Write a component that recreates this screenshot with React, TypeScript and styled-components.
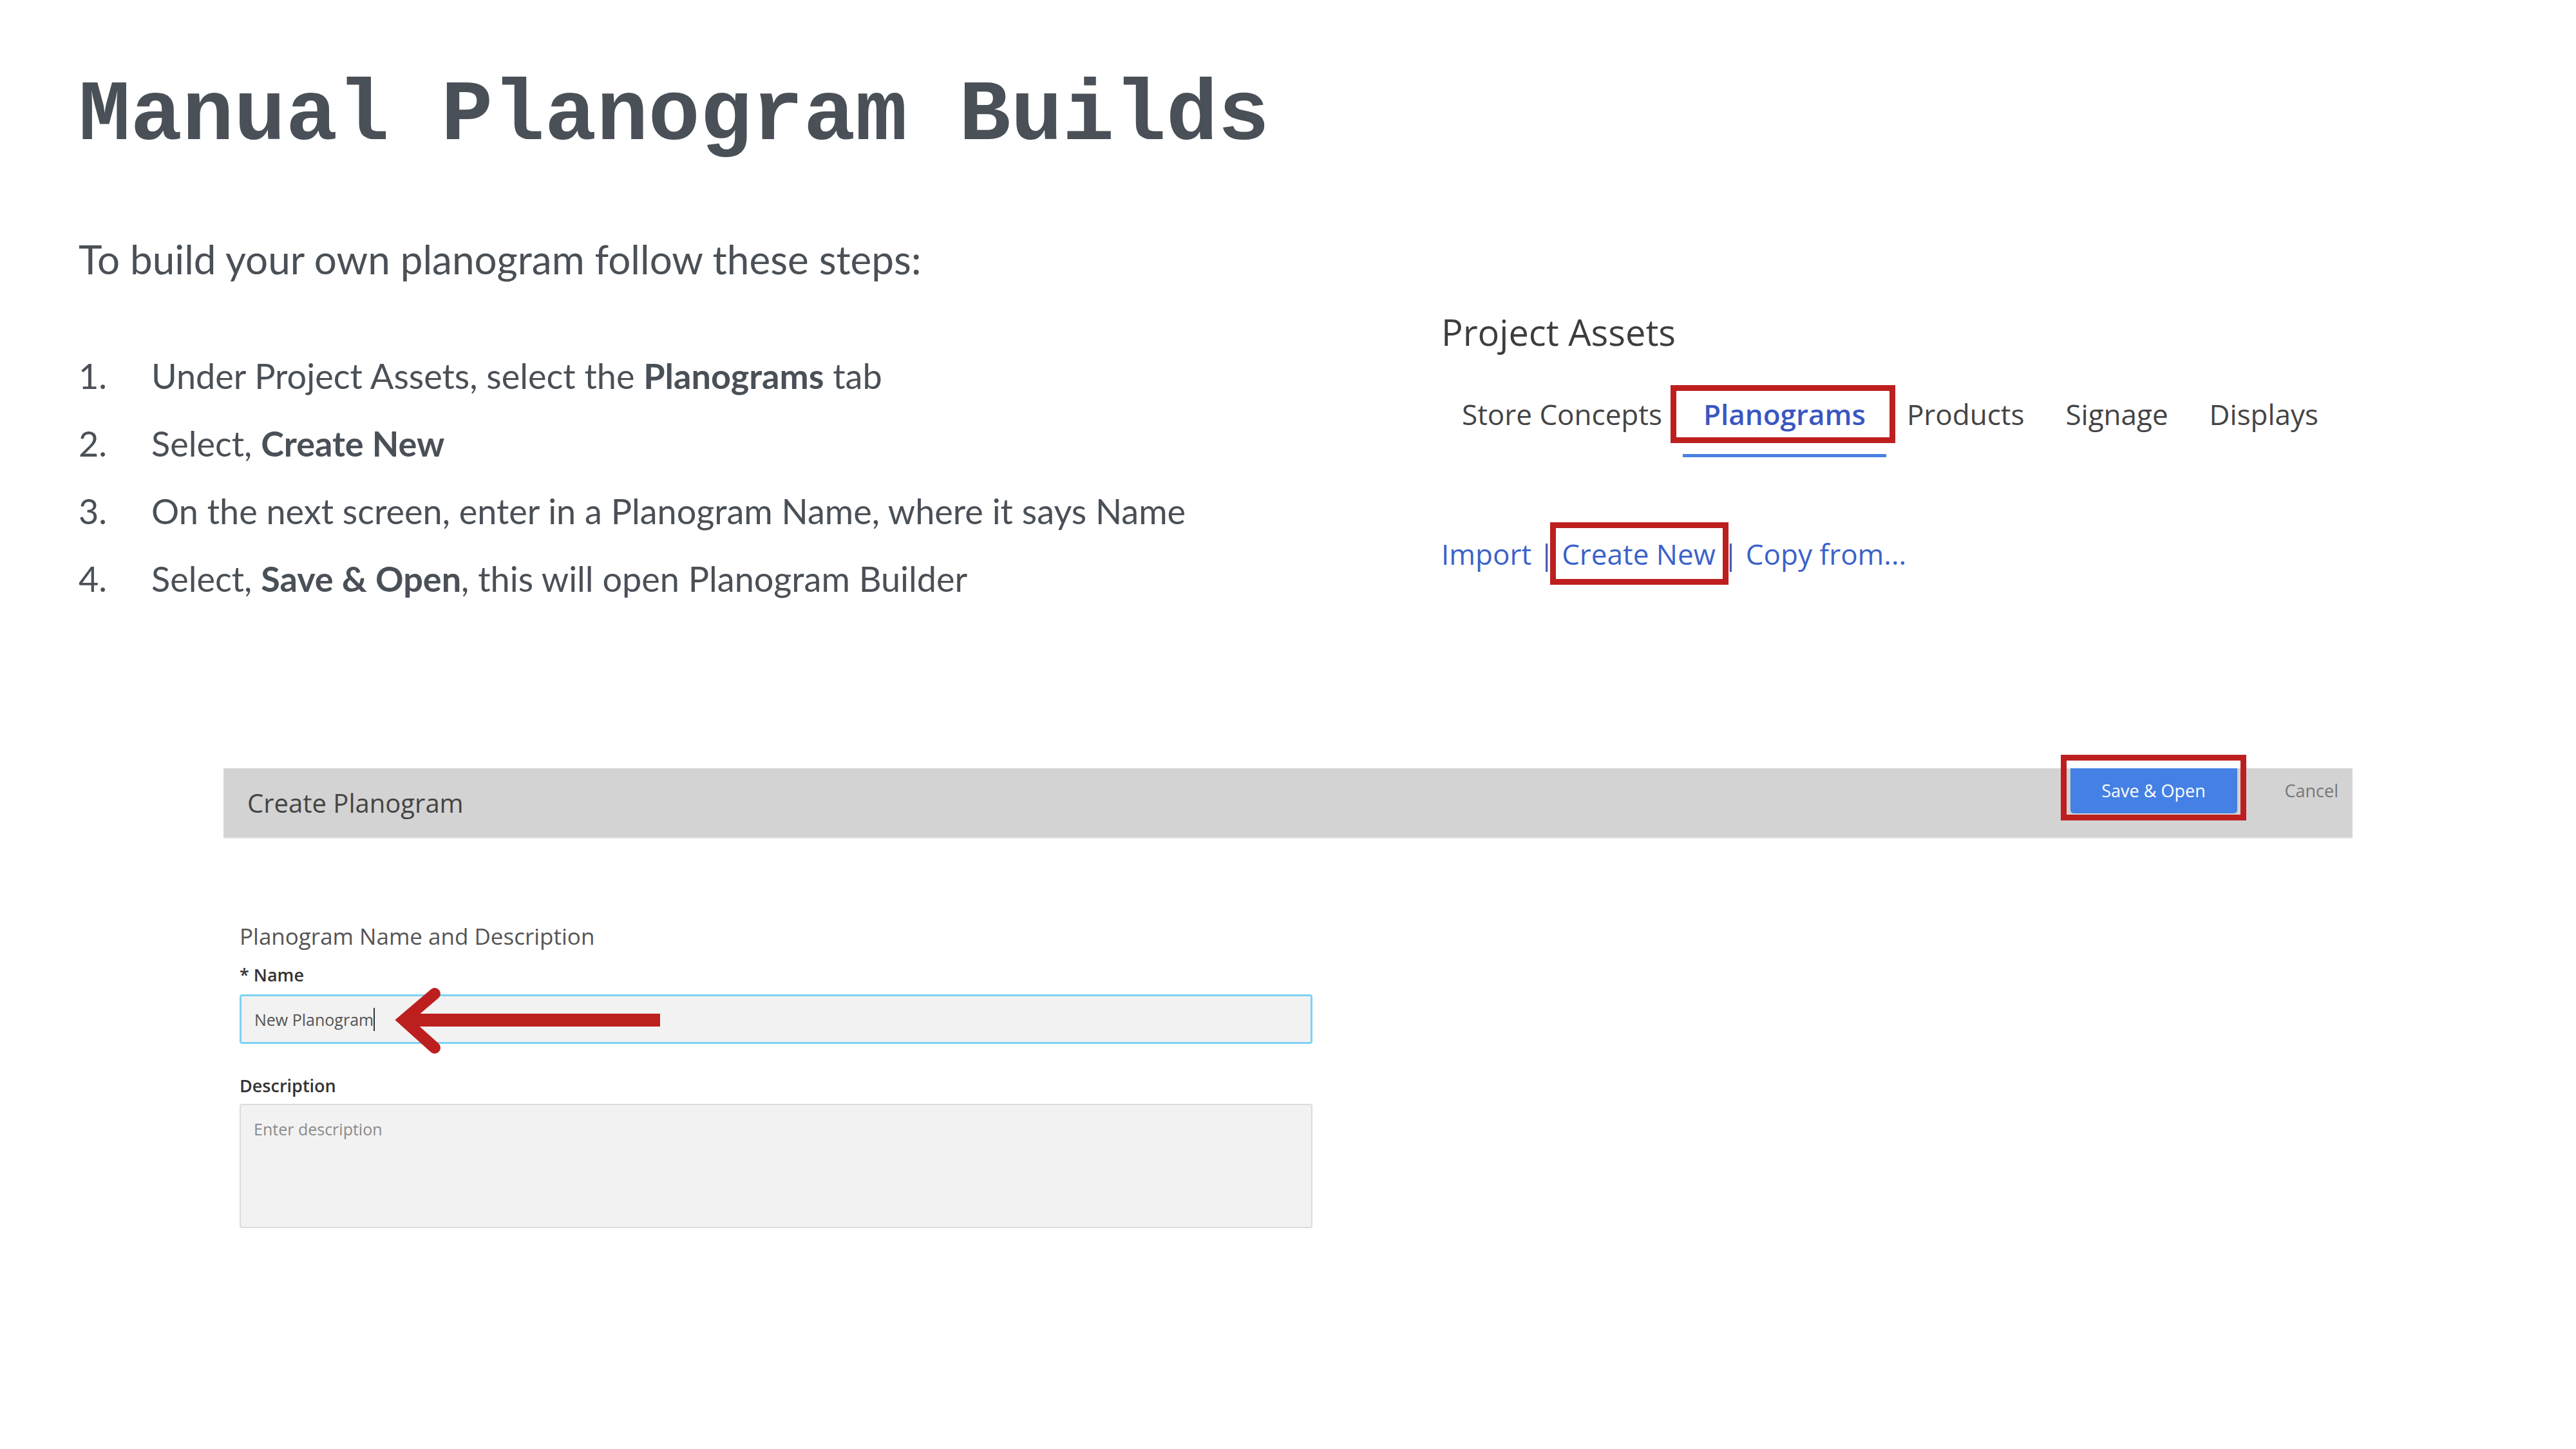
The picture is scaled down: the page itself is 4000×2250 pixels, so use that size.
import styled, { createGlobalStyle } from 'styled-components';

const GlobalStyle = createGlobalStyle`
  html, body {
    margin: 0;
    padding: 0;
    background: #ffffff;
  }
  body {
    width: 4000px;
    height: 2250px;
    overflow: hidden;
  }
`;

const RED = '#bd1f1f';

const Slide = styled.div`
  box-sizing: border-box;
  width: 4000px;
  height: 2250px;
  padding: 104px 0 0 122px;
  background: #ffffff;
  color: #4a5057;
`;

const Title = styled.h1`
  margin: 0;
  font-family: 'Liberation Mono', 'DejaVu Sans Mono', monospace;
  font-weight: 700;
  font-size: 134px;
  line-height: 152px;
  color: #4a5057;
  white-space: nowrap;
`;

const Columns = styled.div`
  display: flex;
  align-items: flex-start;
`;

const Steps = styled.div`
  width: 2116px;
  padding-top: 111px;
  font-family: Lato, 'Open Sans', sans-serif;
`;

const Intro = styled.p`
  margin: 0;
  font-size: 62px;
  line-height: 70px;
  color: #4a5057;
`;

const StepList = styled.ol`
  margin: 94px 0 0;
  padding: 0;
  list-style: none;
`;

const Step = styled.li`
  display: flex;
  font-size: 54px;
  line-height: 105px;
  color: #4a5057;
  white-space: nowrap;

  b {
    font-weight: 700;
  }
`;

const StepNum = styled.span`
  width: 113px;
  flex: none;
`;

const Assets = styled.div`
  padding-top: 221px;
  font-family: 'Open Sans', sans-serif;
`;

const AssetsHeading = styled.h2`
  margin: 0;
  font-weight: 400;
  font-size: 56px;
  line-height: 76px;
  color: #3d3d3d;
`;

const Tabs = styled.div`
  display: flex;
  margin-top: 60px;
`;

const Tab = styled.div<{ $active?: boolean }>`
  position: relative;
  padding: 0 32px 32px;
  font-size: 44px;
  line-height: 60px;
  white-space: nowrap;
  color: ${(p) => (p.$active ? '#3a56c2' : '#444444')};
  font-weight: ${(p) => (p.$active ? 600 : 400)};
  border-bottom: 5px solid ${(p) => (p.$active ? '#4a80e2' : 'transparent')};
`;

const Highlight = styled.span<{ $l: number; $r: number; $t: number; $b: number }>`
  position: absolute;
  left: ${(p) => p.$l}px;
  right: ${(p) => p.$r}px;
  top: ${(p) => p.$t}px;
  bottom: ${(p) => p.$b}px;
  border: 9px solid ${RED};
  pointer-events: none;
`;

const Links = styled.div`
  margin-top: 120px;
  font-size: 44px;
  line-height: 60px;
  color: #3b62c9;
  white-space: nowrap;
`;

const LinkItem = styled.span`
  position: relative;
  display: inline-block;
`;

const Sep = styled.span`
  position: relative;
  z-index: 1;
  color: #3b55a8;
`;

const Form = styled.div`
  width: 3306px;
  margin: 242px 0 0 225px;
  font-family: 'Open Sans', sans-serif;
`;

const Bar = styled.div`
  display: flex;
  align-items: flex-start;
  justify-content: space-between;
  height: 109px;
  background: #d3d3d3;
  border-bottom: 2px solid #e4e4e4;
  box-sizing: border-box;
  padding: 0 22px 0 37px;
`;

const BarTitle = styled.div`
  font-size: 40px;
  line-height: 54px;
  margin-top: 27px;
  color: #444444;
`;

const BarActions = styled.div`
  display: flex;
  align-items: center;
  gap: 74px;
`;

const PrimaryButton = styled.div`
  position: relative;
  width: 259px;
  height: 70px;
  background: #4580e4;
  border-radius: 0 0 5px 5px;
  color: #ffffff;
  font-size: 27px;
  line-height: 70px;
  text-align: center;
`;

const CancelLink = styled.div`
  font-size: 27px;
  line-height: 70px;
  color: #777777;
`;

const Fields = styled.div`
  padding: 128px 0 0 25px;
`;

const SectionTitle = styled.div`
  font-size: 35px;
  line-height: 48px;
  color: #555555;
`;

const Label = styled.div<{ $gap: number }>`
  margin-top: ${(p) => p.$gap}px;
  font-size: 27px;
  line-height: 37px;
  font-weight: 600;
  color: #333333;
`;

const InputBox = styled.div`
  position: relative;
  box-sizing: border-box;
  width: 1666px;
  height: 77px;
  margin-top: 12px;
  padding: 0 20px;
  display: flex;
  align-items: center;
  background: #f2f2f2;
  border: 3px solid #7fd2f2;
  border-radius: 4px;
  font-size: 25px;
  color: #555555;
`;

const Caret = styled.span`
  display: inline-block;
  width: 2px;
  height: 36px;
  background: #333333;
`;

const TextArea = styled.div`
  box-sizing: border-box;
  width: 1666px;
  height: 193px;
  margin-top: 10px;
  padding: 20px 20px;
  background: #f2f2f2;
  border: 2px solid #dcdcdc;
  border-radius: 4px;
  font-size: 25px;
  line-height: 34px;
  color: #8a8a8a;
`;

const ArrowSvg = styled.svg`
  position: absolute;
  left: 230px;
  top: -20px;
`;

function Arrow() {
  return (
    <ArrowSvg width="440" height="116" viewBox="0 0 440 116">
      <path d="M22 57 H420" stroke={RED} strokeWidth="20" fill="none" />
      <path
        d="M70 16 L22 57 L70 100"
        stroke={RED}
        strokeWidth="18"
        strokeLinecap="round"
        strokeLinejoin="miter"
        fill="none"
      />
    </ArrowSvg>
  );
}

export default function App() {
  return (
    <>
      <GlobalStyle />
      <Slide>
        <Title>Manual Planogram Builds</Title>
        <Columns>
          <Steps>
            <Intro>To build your own planogram follow these steps:</Intro>
            <StepList>
              <Step>
                <StepNum>1.</StepNum>
                <span>
                  Under Project Assets, select the <b>Planograms</b> tab
                </span>
              </Step>
              <Step>
                <StepNum>2.</StepNum>
                <span>
                  Select, <b>Create New</b>
                </span>
              </Step>
              <Step>
                <StepNum>3.</StepNum>
                <span>On the next screen, enter in a Planogram Name, where it says Name</span>
              </Step>
              <Step>
                <StepNum>4.</StepNum>
                <span>
                  Select, <b>Save &amp; Open</b>, this will open Planogram Builder
                </span>
              </Step>
            </StepList>
          </Steps>
          <Assets>
            <AssetsHeading>Project Assets</AssetsHeading>
            <Tabs>
              <Tab>Store Concepts</Tab>
              <Tab $active>
                Planograms
                <Highlight $l={-19} $r={-14} $t={-15} $b={17} />
              </Tab>
              <Tab>Products</Tab>
              <Tab>Signage</Tab>
              <Tab>Displays</Tab>
            </Tabs>
            <Links>
              Import <Sep>|</Sep>{' '}
              <LinkItem>
                Create New
                <Highlight $l={-18} $r={-20} $t={-19} $b={-18} />
              </LinkItem>{' '}
              <Sep>|</Sep> Copy from...
            </Links>
          </Assets>
        </Columns>
        <Form>
          <Bar>
            <BarTitle>Create Planogram</BarTitle>
            <BarActions>
              <PrimaryButton>
                Save &amp; Open
                <Highlight $l={-15} $r={-14} $t={-21} $b={-11} />
              </PrimaryButton>
              <CancelLink>Cancel</CancelLink>
            </BarActions>
          </Bar>
          <Fields>
            <SectionTitle>Planogram Name and Description</SectionTitle>
            <Label $gap={17}>* Name</Label>
            <InputBox>
              New Planogram
              <Caret />
              <Arrow />
            </InputBox>
            <Label $gap={46}>Description</Label>
            <TextArea>Enter description</TextArea>
          </Fields>
        </Form>
      </Slide>
    </>
  );
}
